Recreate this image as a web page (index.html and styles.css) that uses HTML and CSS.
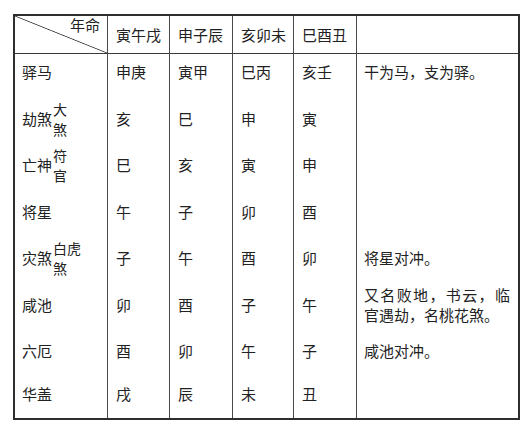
FILE: index.html
```html
<!DOCTYPE html>
<html lang="zh-CN">
<head>
<meta charset="utf-8">
<title>年命</title>
<link rel="stylesheet" href="styles.css">
</head>
<body>
<div class="tbl">
  <div class="c h corner"><span class="corner-label">年命</span></div>
  <div class="c h">寅午戌</div>
  <div class="c h">申子辰</div>
  <div class="c h">亥卯未</div>
  <div class="c h">巳酉丑</div>
  <div class="c h"></div>

  <div class="c">驿马</div>
  <div class="c">申庚</div>
  <div class="c">寅甲</div>
  <div class="c">巳丙</div>
  <div class="c">亥壬</div>
  <div class="c note">干为马，支为驿。</div>

  <div class="c"><span class="name">劫煞</span><span class="sub">大<br>煞</span></div>
  <div class="c">亥</div>
  <div class="c">巳</div>
  <div class="c">申</div>
  <div class="c">寅</div>
  <div class="c note"></div>

  <div class="c"><span class="name">亡神</span><span class="sub">符<br>官</span></div>
  <div class="c">巳</div>
  <div class="c">亥</div>
  <div class="c">寅</div>
  <div class="c">申</div>
  <div class="c note"></div>

  <div class="c">将星</div>
  <div class="c">午</div>
  <div class="c">子</div>
  <div class="c">卯</div>
  <div class="c">酉</div>
  <div class="c note"></div>

  <div class="c"><span class="name">灾煞</span><span class="sub">白虎<br>煞</span></div>
  <div class="c">子</div>
  <div class="c">午</div>
  <div class="c">酉</div>
  <div class="c">卯</div>
  <div class="c note">将星对冲。</div>

  <div class="c">咸池</div>
  <div class="c">卯</div>
  <div class="c">酉</div>
  <div class="c">子</div>
  <div class="c">午</div>
  <div class="c note"><p class="para">又名败地，书云，临官遇劫，名桃花煞。</p></div>

  <div class="c">六厄</div>
  <div class="c">酉</div>
  <div class="c">卯</div>
  <div class="c">午</div>
  <div class="c">子</div>
  <div class="c note">咸池对冲。</div>

  <div class="c">华盖</div>
  <div class="c">戌</div>
  <div class="c">辰</div>
  <div class="c">未</div>
  <div class="c">丑</div>
  <div class="c note"></div>
</div>
</body>
</html>
```

FILE: styles.css
```css
html, body {
  margin: 0;
  padding: 0;
  background: #ffffff;
}

body {
  font-family: "Noto Sans CJK SC", "Noto Sans", sans-serif;
  font-size: 15px;
  color: #222222;
}

.tbl {
  box-sizing: border-box;
  margin: 14px 0 0 13px;
  width: 507px;
  height: 406px;
  border: 2px solid #2e2e2e;
  display: grid;
  grid-template-columns: 93px 62px 63px 61px 63px 161px;
  grid-template-rows: 38px repeat(7, 46.5px) 1fr;
}

.c {
  box-sizing: border-box;
  display: flex;
  align-items: center;
  padding: 0 0 10px 8px;
  line-height: 20px;
  border-right: 1px solid #4a4a4a;
  white-space: nowrap;
}

.c:nth-child(6n) {
  border-right: none;
}

.c:nth-child(6n+1) {
  padding-left: 7px;
}

.h {
  border-bottom: 1px solid #3a3a3a;
  padding-bottom: 0;
}

.corner {
  align-items: flex-start;
  justify-content: flex-end;
  padding: 0 7px 0 0;
  line-height: 18px;
  background: linear-gradient(to top right,
    transparent calc(50% - 0.8px),
    #3a3a3a 50%,
    transparent calc(50% + 0.8px));
}

.name {
  display: block;
}

.sub {
  display: block;
  font-size: 14px;
  line-height: 20px;
  margin-left: 1px;
}

.note {
  padding-left: 7px;
  padding-right: 8px;
}

.para {
  margin: 0;
  white-space: normal;
  width: 146px;
  text-align: justify;
  text-align-last: left;
}
```
